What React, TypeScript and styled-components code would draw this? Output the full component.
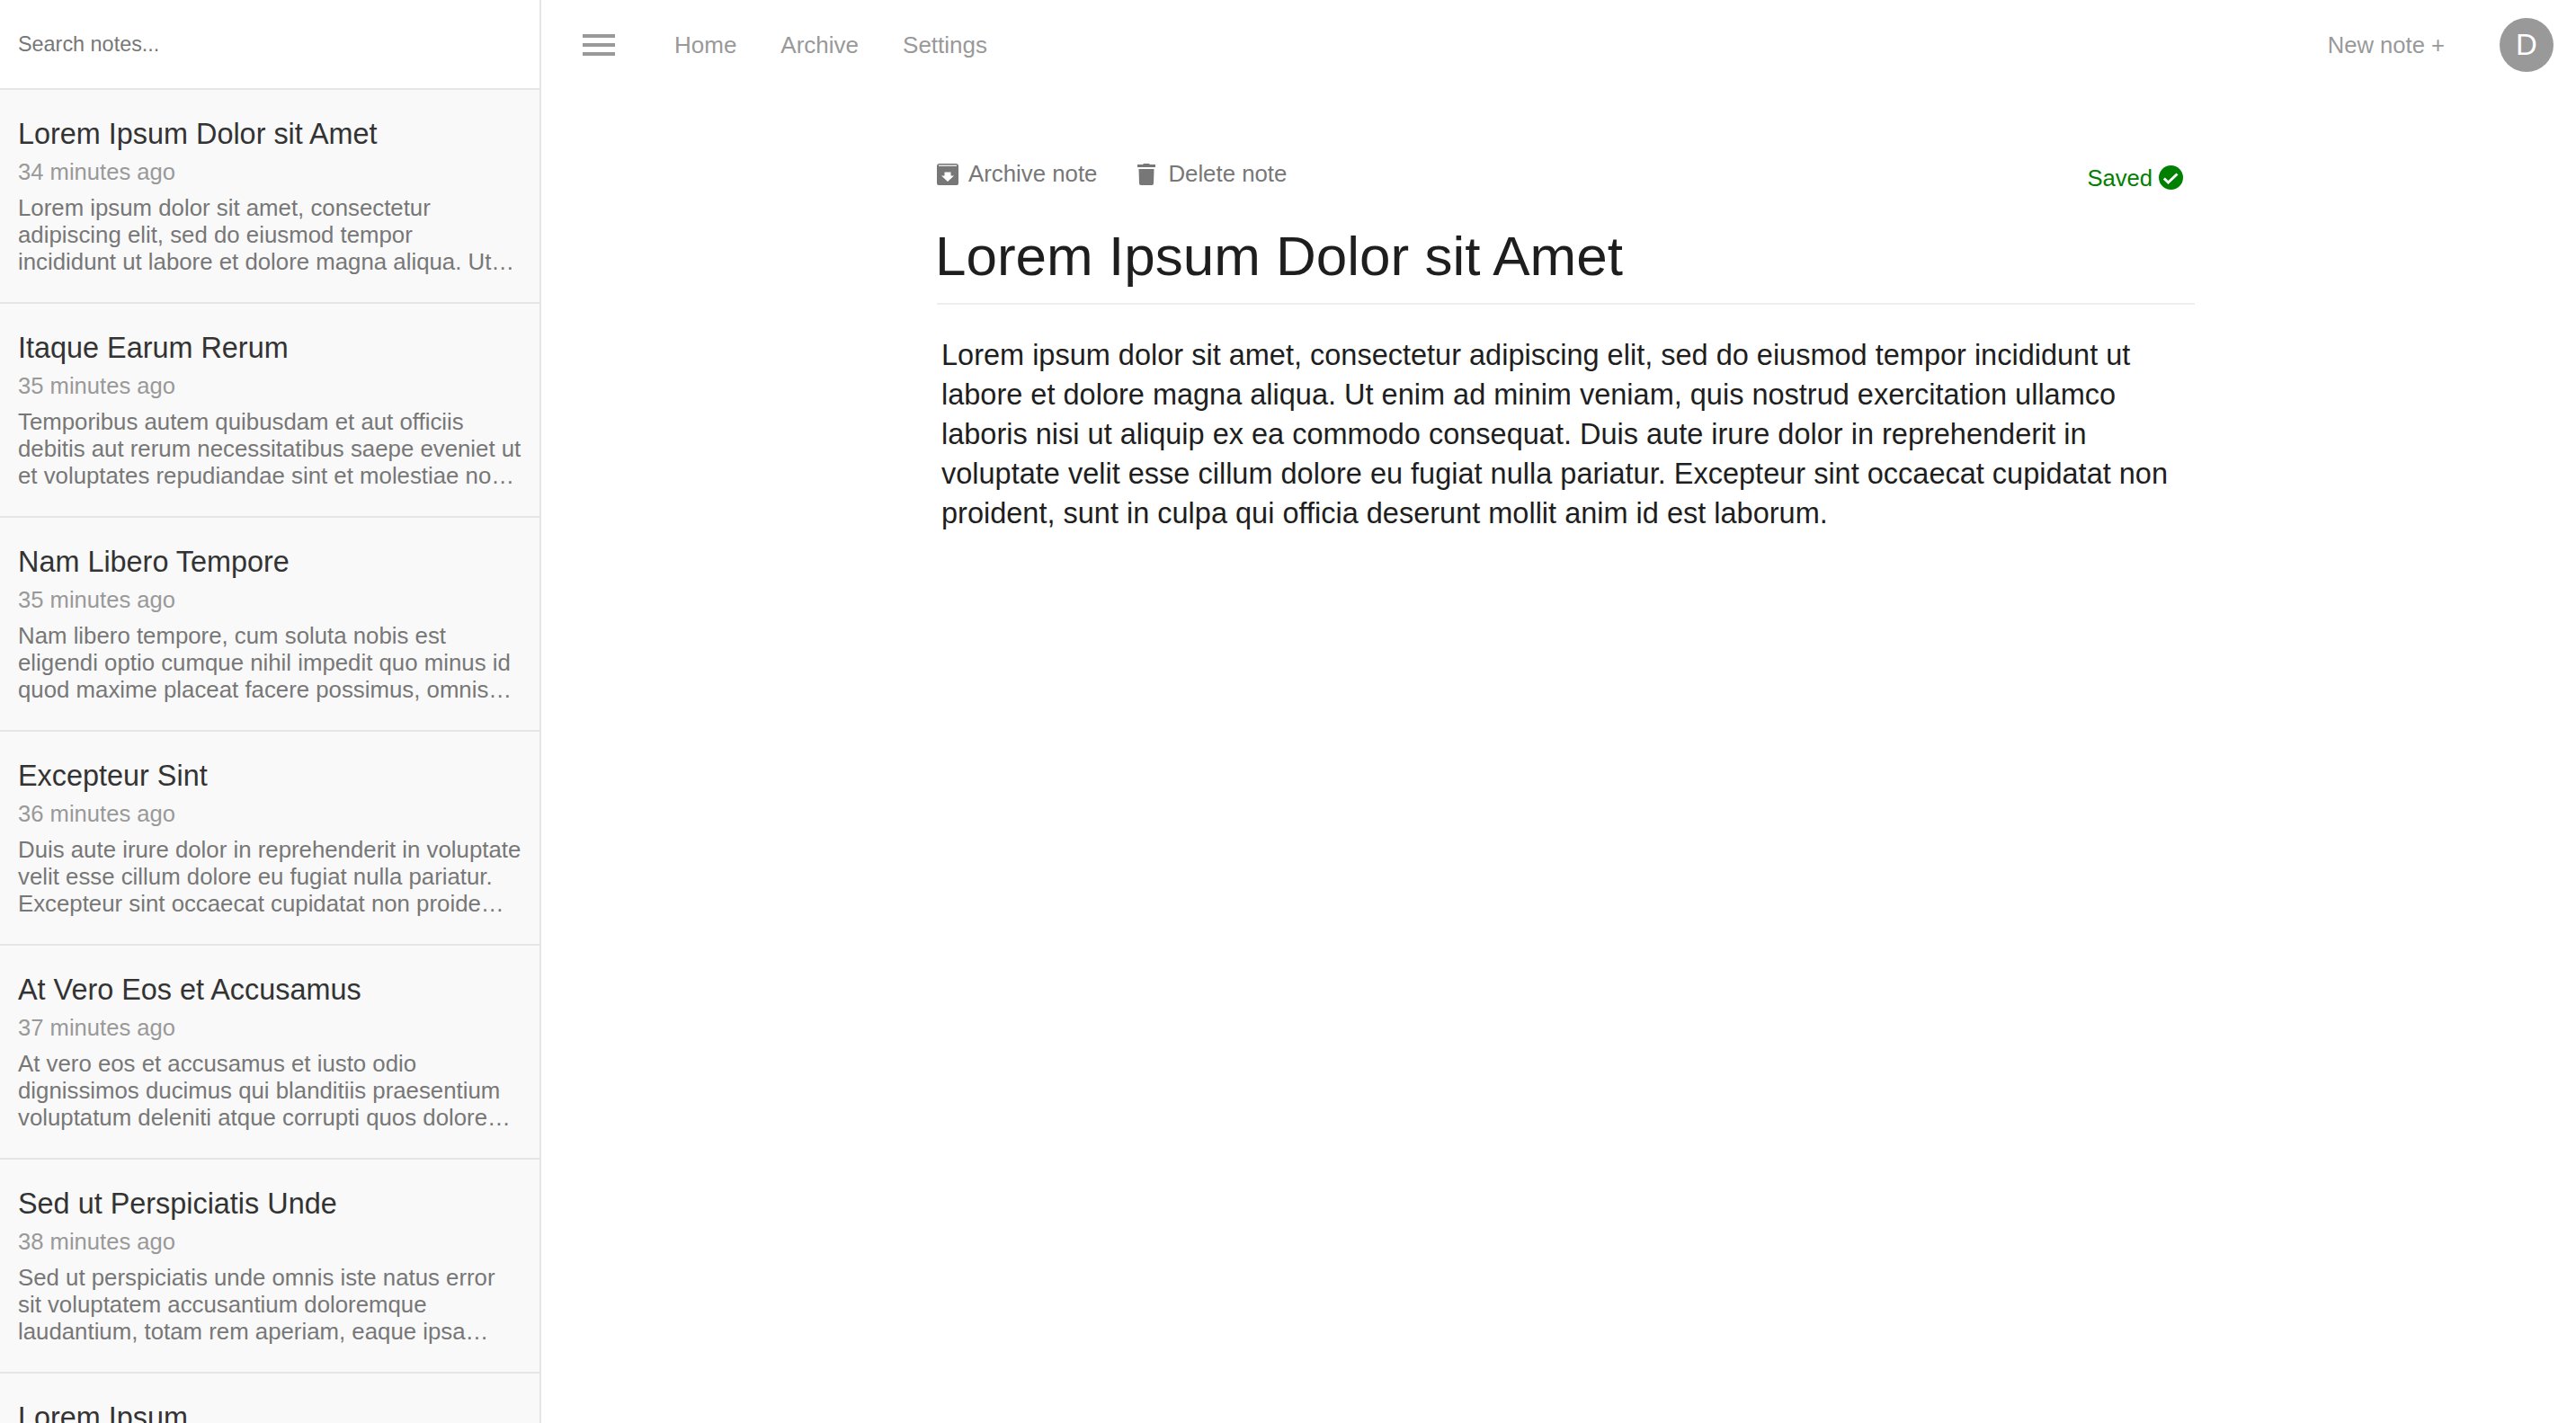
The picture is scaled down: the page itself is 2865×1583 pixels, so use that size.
import styled, { createGlobalStyle } from "styled-components";

const notes = [
  {
    title: "Lorem Ipsum Dolor sit Amet",
    time: "34 minutes ago",
    lines: [
      "Lorem ipsum dolor sit amet, consectetur",
      "adipiscing elit, sed do eiusmod tempor",
      "incididunt ut labore et dolore magna aliqua. Ut…",
    ],
  },
  {
    title: "Itaque Earum Rerum",
    time: "35 minutes ago",
    lines: [
      "Temporibus autem quibusdam et aut officiis",
      "debitis aut rerum necessitatibus saepe eveniet ut",
      "et voluptates repudiandae sint et molestiae no…",
    ],
  },
  {
    title: "Nam Libero Tempore",
    time: "35 minutes ago",
    lines: [
      "Nam libero tempore, cum soluta nobis est",
      "eligendi optio cumque nihil impedit quo minus id",
      "quod maxime placeat facere possimus, omnis…",
    ],
  },
  {
    title: "Excepteur Sint",
    time: "36 minutes ago",
    lines: [
      "Duis aute irure dolor in reprehenderit in voluptate",
      "velit esse cillum dolore eu fugiat nulla pariatur.",
      "Excepteur sint occaecat cupidatat non proide…",
    ],
  },
  {
    title: "At Vero Eos et Accusamus",
    time: "37 minutes ago",
    lines: [
      "At vero eos et accusamus et iusto odio",
      "dignissimos ducimus qui blanditiis praesentium",
      "voluptatum deleniti atque corrupti quos dolore…",
    ],
  },
  {
    title: "Sed ut Perspiciatis Unde",
    time: "38 minutes ago",
    lines: [
      "Sed ut perspiciatis unde omnis iste natus error",
      "sit voluptatem accusantium doloremque",
      "laudantium, totam rem aperiam, eaque ipsa…",
    ],
  },
  {
    title: "Lorem Ipsum",
    time: "39 minutes ago",
    lines: [
      "Lorem ipsum dolor sit amet, consectetur",
      "adipiscing elit, sed do eiusmod tempor",
      "incididunt ut labore et dolore magna aliqua. Ut…",
    ],
  },
];

const body =
  "Lorem ipsum dolor sit amet, consectetur adipiscing elit, sed do eiusmod tempor incididunt ut labore et dolore magna aliqua. Ut enim ad minim veniam, quis nostrud exercitation ullamco laboris nisi ut aliquip ex ea commodo consequat. Duis aute irure dolor in reprehenderit in voluptate velit esse cillum dolore eu fugiat nulla pariatur. Excepteur sint occaecat cupidatat non proident, sunt in culpa qui officia deserunt mollit anim id est laborum.";

export default function App() {
  return (
    <>
      <GlobalStyle />
      <Page>
        <Sidebar>
          <SearchBar>
            <SearchInput placeholder="Search notes..." />
          </SearchBar>
          {notes.map((note) => (
            <NoteRow key={note.title}>
              <NoteTitle>{note.title}</NoteTitle>
              <NoteTime>{note.time}</NoteTime>
              <NoteSnippet>
                {note.lines.map((line) => (
                  <div key={line}>{line}</div>
                ))}
              </NoteSnippet>
            </NoteRow>
          ))}
        </Sidebar>

        <Main>
          <TopBar>
            <Burger>
              <span />
              <span />
              <span />
            </Burger>
            <NavLink>Home</NavLink>
            <NavLink>Archive</NavLink>
            <NavLink>Settings</NavLink>
            <NewNote>New note +</NewNote>
            <Avatar>D</Avatar>
          </TopBar>

          <Editor>
            <ActionRow>
              <Action $gap={11}>
                <svg width="24" height="24" viewBox="0 0 24 24">
                  <path
                    fill="#777"
                    d="M3 0h18a3 3 0 0 1 3 3v2H0V3a3 3 0 0 1 3-3zM0 5h24v17a2 2 0 0 1-2 2H2a2 2 0 0 1-2-2z"
                  />
                  <path fill="#e4e4e4" d="M2 1.5h20v1.5H2z" />
                  <path fill="#fff" d="M8.5 9.5h7v4H19l-7 6.5-7-6.5h3.5z" />
                </svg>
                Archive note
              </Action>
              <Action $gap={14}>
                <svg width="20" height="24" viewBox="0 0 20 24">
                  <path
                    fill="#777"
                    d="M7 0h6l1 1h6v3H0V1h6zM1.5 6h17l-.5 16a2 2 0 0 1-2 2H4a2 2 0 0 1-2-2z"
                  />
                </svg>
                Delete note
              </Action>
              <Saved>
                <span>Saved</span>
                <svg width="27" height="27" viewBox="0 0 27 27">
                  <circle cx="13.5" cy="13.5" r="13.5" fill="#008000" />
                  <path
                    d="M5.8 14.5l4.7 4.5L20.5 9.5"
                    fill="none"
                    stroke="#fff"
                    strokeWidth="3"
                  />
                </svg>
              </Saved>
            </ActionRow>
            <Heading>Lorem Ipsum Dolor sit Amet</Heading>
            <Content>{body}</Content>
          </Editor>
        </Main>
      </Page>
    </>
  );
}

const GlobalStyle = createGlobalStyle`
  html, body {
    margin: 0;
    height: 100%;
    overflow: hidden;
    background: #fff;
  }

  * {
    box-sizing: border-box;
  }

  body {
    font-family: "Liberation Sans", Arial, sans-serif;
  }
`;

const Page = styled.div`
  display: flex;
  height: 1583px;
  overflow: hidden;
`;

const Sidebar = styled.aside`
  flex: 0 0 602px;
  height: 100%;
  overflow: hidden;
  border-right: 2px solid #e5e5e5;
`;

const SearchBar = styled.div`
  display: flex;
  align-items: center;
  height: 100px;
  padding: 0 20px;
  border-bottom: 2px solid #e5e5e5;
`;

const SearchInput = styled.input`
  width: 100%;
  border: 0;
  outline: 0;
  padding: 0;
  font: 23.4px "Liberation Sans", Arial, sans-serif;
  background: transparent;

  &::placeholder {
    color: #777;
    opacity: 1;
  }
`;

const NoteRow = styled.div`
  height: 238px;
  padding: 28px 20px 0;
  background: #f9f9f9;
  border-bottom: 2px solid #e5e5e5;
`;

const NoteTitle = styled.div`
  font-size: 32.4px;
  line-height: 42px;
  color: #333;
`;

const NoteTime = styled.div`
  margin-top: 3px;
  font-size: 25.6px;
  line-height: 36px;
  color: #999;
`;

const NoteSnippet = styled.div`
  margin-top: 8px;
  font-size: 25.8px;
  line-height: 29.8px;
  white-space: nowrap;
  color: #777;
`;

const Main = styled.main`
  flex: 1;
  min-width: 0;
`;

const TopBar = styled.header`
  display: flex;
  align-items: center;
  height: 100px;
  padding: 0 25px 0 46px;
`;

const Burger = styled.div`
  display: flex;
  flex-direction: column;
  gap: 6px;
  width: 36px;
  margin-right: 66px;

  span {
    height: 4px;
    background: #999;
  }
`;

const NavLink = styled.a`
  margin-right: 49px;
  font-size: 26px;
  color: #999;
`;

const NewNote = styled.a`
  margin-left: auto;
  margin-right: 61px;
  font-size: 25.6px;
  color: #999;
`;

const Avatar = styled.div`
  display: flex;
  align-items: center;
  justify-content: center;
  width: 60px;
  height: 60px;
  border-radius: 50%;
  background: #999;
  color: #fff;
  font-size: 32.9px;
`;

const Editor = styled.section`
  width: 1399px;
  margin-left: 440px;
`;

const ActionRow = styled.div`
  display: flex;
  align-items: flex-start;
  height: 109px;
  padding-top: 79px;
`;

const Action = styled.a<{ $gap: number }>`
  display: flex;
  align-items: center;
  gap: ${(p) => p.$gap}px;
  margin-right: 45px;
  font-size: 25.8px;
  color: #777;
`;

const Saved = styled.div`
  display: flex;
  align-items: center;
  gap: 7px;
  margin-left: auto;
  margin-right: 13px;
  margin-top: 2px;
  font-size: 25.6px;
  color: #008000;

  span {
    padding-top: 3px;
  }
`;

const Heading = styled.h1`
  margin: 38px 0 0;
  padding-bottom: 14px;
  border-bottom: 2px solid #eee;
  font-size: 62px;
  line-height: 76px;
  font-weight: 400;
  text-indent: -2px;
  color: #1e1e1e;
`;

const Content = styled.p`
  margin: 34px 0 0;
  padding: 0 5px;
  font-size: 32.5px;
  line-height: 44px;
  color: #1e1e1e;
`;
